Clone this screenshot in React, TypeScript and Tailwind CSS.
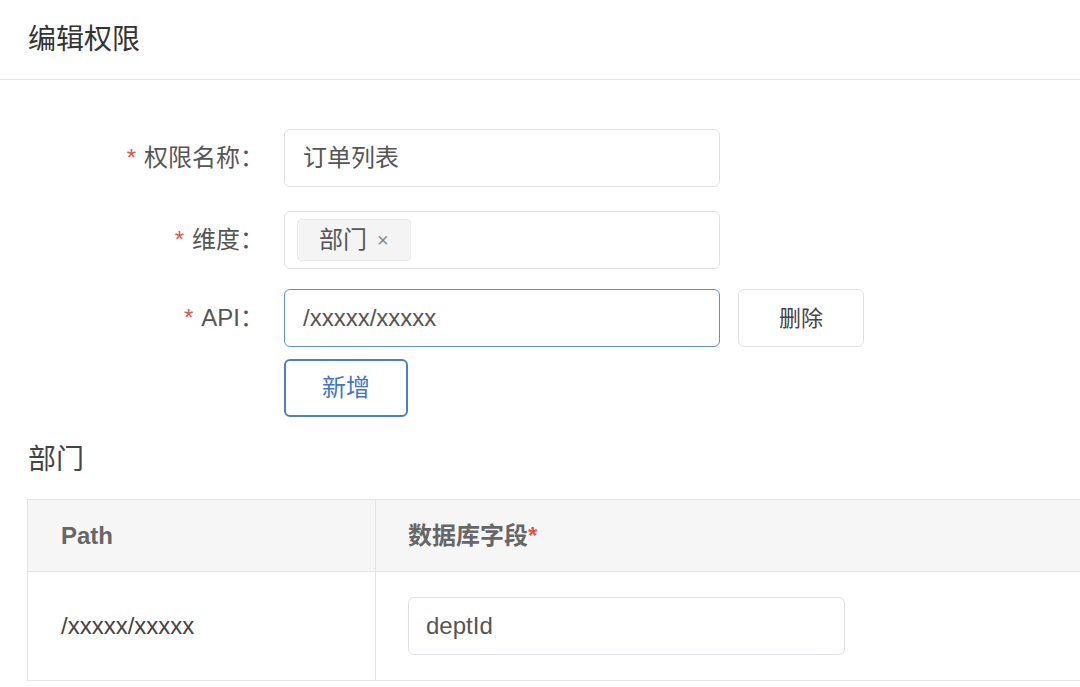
import React from 'react';

const font = { fontFamily: '"Liberation Sans", "Noto Sans CJK SC", sans-serif' };

function Label({ text }: { text: string }) {
  return (
    <div className="w-[284px] shrink-0 pr-[20px] text-right text-[24px] text-[#555]">
      <span className="text-[#e5534b] mr-2">*</span>
      {text}：
    </div>
  );
}

export default function App() {
  return (
    <div className="w-[1080px] h-[687px] overflow-hidden bg-white" style={font}>
      <div className="h-[80px] border-b border-[#e6e6e6] flex items-center pl-[28px] text-[28px] text-[#333]">编辑权限</div>
      <div className="pt-[49px] flex flex-col">
        <div className="flex items-center h-[58px]">
          <Label text="权限名称" />
          <div className="w-[436px] h-[58px] border border-[#dcdfe6] rounded-[6px] flex items-center px-[18px] text-[24px] text-[#555]">订单列表</div>
        </div>
        <div className="flex items-center h-[58px] mt-[24px]">
          <Label text="维度" />
          <div className="w-[436px] h-[58px] border border-[#dcdfe6] rounded-[6px] flex items-center px-[12px]">
            <div className="h-[42px] px-[21px] bg-[#f4f4f5] border border-[#e9e9eb] rounded-[4px] flex items-center gap-[10px] text-[24px] text-[#555]">
              部门<span className="text-[20px] text-[#888]">×</span>
            </div>
          </div>
        </div>
        <div className="flex items-center h-[58px] mt-[20px]">
          <Label text="API" />
          <div className="w-[436px] h-[58px] border border-[#5b8fe0] rounded-[6px] flex items-center px-[18px] text-[24px] text-[#555]">/xxxxx/xxxxx</div>
          <div className="ml-[18px] w-[126px] h-[58px] border border-[#dcdfe6] rounded-[6px] flex items-center justify-center text-[22px] text-[#444]">删除</div>
        </div>
        <div className="pl-[284px] mt-[12px]">
          <div className="w-[124px] h-[58px] border-2 border-[#4a7fd0] rounded-[6px] flex items-center justify-center text-[24px] text-[#3f74c9]">新增</div>
        </div>
        <div className="pl-[28px] mt-[22px] text-[28px] text-[#444]">部门</div>
        <div className="ml-[27px] mt-[18px] w-[1080px] border border-[#e4e4e4]">
          <div className="flex h-[72px] bg-[#f6f6f6] border-b border-[#e4e4e4] text-[24px] text-[#666] font-semibold">
            <div className="w-[348px] border-r border-[#e4e4e4] flex items-center pl-[33px]">Path</div>
            <div className="flex items-center pl-[32px]">数据库字段<span className="text-[#e5534b]">*</span></div>
          </div>
          <div className="flex h-[108px] text-[24px] text-[#444]">
            <div className="w-[348px] border-r border-[#e4e4e4] flex items-center pl-[33px]">/xxxxx/xxxxx</div>
            <div className="flex items-center pl-[32px]">
              <div className="w-[437px] h-[58px] border border-[#dcdfe6] rounded-[6px] flex items-center px-[17px] text-[#555]">deptId</div>
            </div>
          </div>
        </div>
      </div>
    </div>
  );
}
